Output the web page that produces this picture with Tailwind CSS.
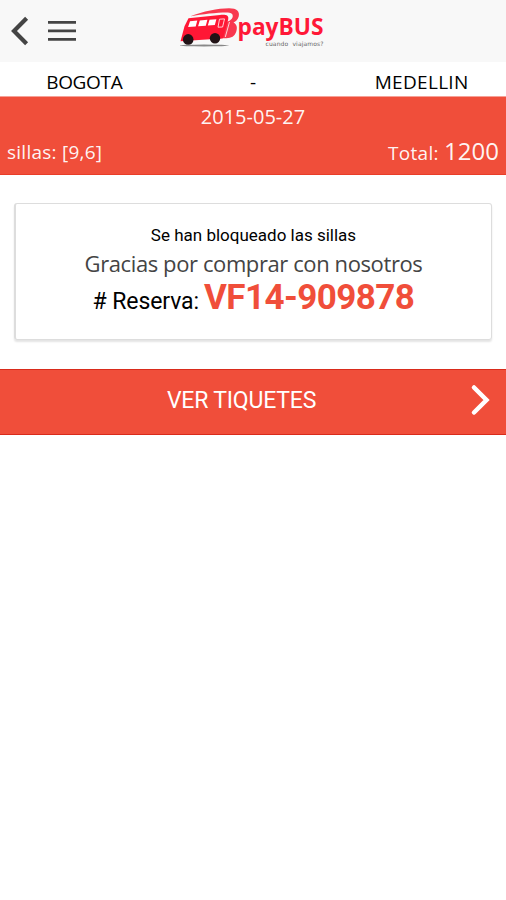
<!DOCTYPE html>
<html lang="es">
<head>
<meta charset="utf-8">
<title>payBUS</title>
<script src="https://cdn.jsdelivr.net/npm/@tailwindcss/browser@4"></script>
</head>
<body class="bg-white text-black font-['Open_Sans','Noto_Sans',sans-serif] w-[506px] h-[900px] overflow-hidden whitespace-nowrap">
<header class="h-[62px] bg-[#f8f8f8] grid grid-cols-[180px_146px_1fr]">
  <nav class="flex items-center pl-[11px] gap-[18px] text-[#444]">
    <svg class="w-[18px] h-[30px]" viewBox="0 0 18 30" fill="none" stroke="currentColor" stroke-width="4.2"><path d="M15.6 2.2 3 15l12.6 12.8"/></svg>
    <svg class="w-[30px] h-[22px]" viewBox="0 0 30 22" fill="currentColor"><path d="M1 1h28v2.800H1zM1 9.500h28v2.800H1zM1 18h28v2.800H1z"/></svg>
  </nav>
  <svg class="w-[146px] h-[62px]" viewBox="180 0 146 62">
    <ellipse cx="204" cy="45.500" rx="25" ry=".9" fill="#888"/>
    <path d="M190.500 16.200C203 11.500 218 8.300 229 8.300c8 0 11 3.500 9.700 8.300-.8 3-2.700 4.700-5.200 6 3.500 1.800 4 5.400 2.700 9.200-1.600 4.600-5 6.500-10.200 6.400h-7l5-15.700c4-.4 8-2.500 8.700-5.700.6-3-2-4.300-6.200-4.300-10 0-24 1.700-36 3.700z" fill="#f8384e"/>
    <path d="M188.500 18.200 220 15c6.500-.6 9 .7 8.200 4.500l-4.700 17.200c-.3 1.300-1 1.800-2.300 1.900L180.500 41.200l4-15z" fill="#ff1735"/>
    <path d="m190 21.200 7.300-.7-1.600 5.900-7.600.5zM199.800 20.400l7.600-.7-1.600 6.100-7.700.5zM209.500 19.700l6.900-.5-1.600 5.900-7 .5z" fill="#fff"/>
    <path d="m219.500 19.200 5-.3-1.900 8.100-4.600.2zM229.500 22l-4.200 15" fill="none" stroke="#ffe3e6" stroke-width=".9"/>
    <circle cx="188.200" cy="39.400" r="5.300" fill="#211316"/><circle cx="215" cy="38.300" r="5.200" fill="#211316"/>
    <text x="237.500" y="35.300" textLength="86" lengthAdjust="spacingAndGlyphs" font-family="Open Sans, sans-serif" font-size="23" font-weight="700" fill="#ff1837">payBUS</text>
    <text x="265.500" y="45.500" textLength="58" font-family="DejaVu Sans, sans-serif" font-size="6" fill="#666" xml:space="preserve">cuando  viajamos?</text>
  </svg>
</header>
<section class="h-[34px] grid grid-cols-3 text-center text-[19px] leading-[40px]">
  <span class="tracking-[-0.3px]">BOGOTA</span><span>-</span><span class="tracking-[0.3px]">MEDELLIN</span>
</section>
<section class="h-[79px] bg-[#f04e3a] border-t border-t-[#f6a096] border-b border-b-[#e93d28] text-white/95">
  <p class="text-center text-[20px] leading-[40px] h-[36px]">2015-05-27</p>
  <div class="flex justify-between px-[7px] leading-[38px] text-[19px]">
    <span class="tracking-[0.250px]">sillas: [9,6]</span>
    <span class="h-[38px] -mt-px tracking-[0.3px]">Total: <span class="text-[24px] tracking-normal">1200</span></span>
  </div>
</section>
<main class="pt-[28px] px-[14px]">
  <article class="h-[137px] rounded-[3px] border border-[#ddd] border-l-2 shadow-[0_2px_2px_#e4e4e4] text-center pt-[17px]">
    <p class="font-[Roboto] text-[17px] leading-[28px]">Se han bloqueado las sillas</p>
    <p class="text-[22px] tracking-[-0.400px] leading-[29px] text-[#444]">Gracias por comprar con nosotros</p>
    <p class="font-[Roboto] text-[23px] leading-[40px] flex justify-center items-baseline gap-[5px]"><span class="tracking-[-0.1px]"># Reserva:</span><strong class="text-[35px] tracking-[-0.550px] font-bold text-[#f04e3a]">VF14-909878</strong></p>
  </article>
</main>
<button class="mt-[29px] w-full h-[66px] bg-[#f04e3a] border-y border-[#d92b1b] text-white font-[Roboto] text-[23px] grid grid-cols-[1fr_24px] items-center pr-[14px]">
  <span class="pl-[15px] pb-[2px] tracking-[-0.200px]">VER TIQUETES</span>
  <svg class="w-[24px] h-[32px] -mt-[4px]" viewBox="0 0 24 32" fill="none" stroke="currentColor" stroke-width="4.500" stroke-linecap="round"><path d="M6 3.500 18.500 16 6 28.500"/></svg>
</button>
</body>
</html>
